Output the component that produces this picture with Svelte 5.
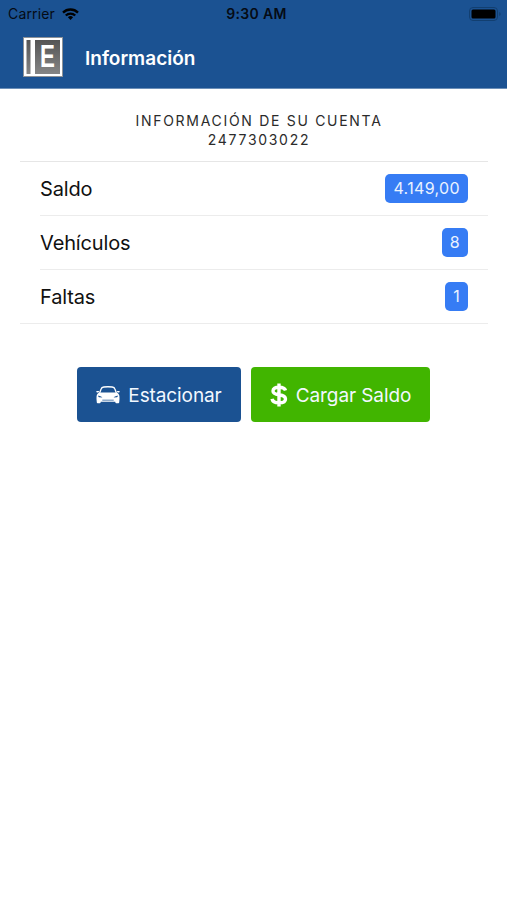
<script>
	let carrier = 'Carrier';
	let time = '9:30 AM';
	let title = 'Información';
	let account = '2477303022';

	let items = [
		{ label: 'Saldo', value: '4.149,00' },
		{ label: 'Vehículos', value: '8' },
		{ label: 'Faltas', value: '1' }
	];
</script>

<main>
	<header>
		<div class="status-bar">
			<div class="carrier">
				<span>{carrier}</span>
				<svg class="wifi" viewBox="0 0 17 12" width="17" height="12">
					<g fill="none" stroke="#000" stroke-width="2.3">
						<path d="M1 4.6a10.6 10.6 0 0 1 15 0" />
						<path d="M3.8 7.5a6.6 6.6 0 0 1 9.4 0" />
					</g>
					<path d="M8.500 12 5.900 9.300a3.700 3.700 0 0 1 5.200 0z" />
				</svg>
			</div>
			<strong>{time}</strong>
			<svg class="battery" viewBox="0 0 32 14" width="32" height="14">
				<rect x="0.500" y="0.500" width="28" height="13" rx="3.500" fill="none" stroke="#123f70" />
				<rect x="2.500" y="2.500" width="24" height="9" rx="1.500" />
				<path d="M30.300 5v4q1.300-.6 1.300-2t-1.300-2z" fill="#123f70" />
			</svg>
		</div>
		<div class="toolbar">
			<div class="logo">
				<svg viewBox="0 0 40 40" width="40" height="40">
					<defs>
						<linearGradient id="metal" x1="0" y1="0" x2="0" y2="1">
							<stop offset="0" stop-color="#555" />
							<stop offset="1" stop-color="#858585" />
						</linearGradient>
					</defs>
					<rect x="0.500" y="0.500" width="39" height="39" fill="#fff" stroke="#8d9298" />
					<rect x="3.500" y="3" width="4" height="34" fill="url(#metal)" />
					<rect x="12" y="3" width="25" height="34" fill="url(#metal)" />
				</svg>
				<span>E</span>
			</div>
			<h1>{title}</h1>
		</div>
	</header>

	<section class="account">
		<h2>Información de su cuenta<br />{account}</h2>
		<ul>
			{#each items as { label, value }}
				<li>
					<div class="row">
						<span>{label}</span>
						<span class="badge">{value}</span>
					</div>
				</li>
			{/each}
		</ul>
	</section>

	<div class="actions">
		<button class="park">
			<svg viewBox="0 0 24 18" width="24" height="18">
				<path d="M3.600 7 5.100 3Q5.600 1.300 7.800 1q4.200-.5 8.400 0 2.200.3 2.700 2l1.500 4" fill="none" stroke="#fff" stroke-width="1.300" />
				<path d="M.6 5h2.500l-.5 1.500H.9q-1-.8-.3-1.500zM23.400 5h-2.500l.5 1.500h1.700q1-.8.3-1.500z" fill="#fff" />
				<path fill-rule="evenodd" d="M4 6.500h16q2.400.4 3.100 2.300.5 1.500.4 4.300l-.3 3.400q-.1.700-.8.700h-2.200q-.7 0-.8-.7l-.2-.7H4.800l-.2.700q-.1.700-.8.700H1.600q-.7 0-.8-.7L.5 13.100Q.4 10.300.9 8.800 1.600 6.900 4 6.500zM2.200 9.400q0 1.400.8 1.900l3.400.3q-.5-1.500-4.200-2.200zm19.600 0q0 1.400-.8 1.900l-3.400.3q.5-1.500 4.200-2.200zM6.300 13.700v.7h11.400v-.7z" fill="#fff" />
			</svg>
			<span>Estacionar</span>
		</button>
		<button class="charge">
			<svg viewBox="0 0 18 24" width="18" height="24">
				<path d="M15.500 7.500Q14.600 4.200 9 4.200q-6 0-6 3.700 0 3 6 3.800 6.500.8 6.500 4.200 0 3.900-6.500 3.900-6.200 0-7-3.900M9 .5v23" fill="none" stroke="#fff" stroke-width="3.400" />
			</svg>
			<span>Cargar Saldo</span>
		</button>
	</div>
</main>

<style>
	:global(body) {
		margin: 0;
		background: #fff;
	}

	main {
		min-height: 900px;
		font-family: Inter, "Liberation Sans", sans-serif;
		color: #111;
	}

	header {
		height: 88px;
		background: #1b5292;
		border-bottom: 1px solid #6c8fb8;
	}

	.status-bar {
		display: grid;
		grid-template-columns: 1fr auto 1fr;
		align-items: center;
		height: 27px;
		padding: 0 6px 0 8px;
		font-size: 14px;
		color: #050b14;
	}

	.status-bar strong {
		padding-left: 4px;
		font-weight: 600;
		letter-spacing: 0.35px;
	}

	.carrier {
		display: flex;
		align-items: center;
		gap: 7px;
		letter-spacing: 0.15px;
	}

	.battery {
		justify-self: end;
	}

	.toolbar {
		display: flex;
		align-items: center;
		gap: 22px;
		height: 60px;
		padding-left: 23px;
	}

	.logo {
		position: relative;
		width: 40px;
		height: 40px;
	}

	.logo svg {
		display: block;
	}

	.logo span {
		position: absolute;
		left: 17px;
		top: 4px;
		font: bold 31px/32px "Liberation Sans", sans-serif;
		color: #fff;
		transform: scaleX(0.72);
		transform-origin: left;
	}

	h1 {
		margin: 0;
		padding-top: 2px;
		font-size: 19px;
		font-weight: 600;
		color: #fff;
	}

	.account {
		padding: 23px 19px 0 20px;
	}

	h2 {
		margin: 0;
		padding: 0 0 12px 10px;
		font-size: 14px;
		line-height: 18.500px;
		font-weight: 400;
		letter-spacing: 1.7px;
		text-align: center;
		text-transform: uppercase;
		color: #2b2b2b;
	}

	ul {
		margin: 0;
		padding: 0;
		border-top: 1px solid #e6e6e6;
		list-style: none;
	}

	li {
		padding-left: 20px;
	}

	.row {
		display: flex;
		justify-content: space-between;
		align-items: center;
		box-sizing: border-box;
		height: 54px;
		padding-right: 20px;
		border-bottom: 1px solid #ececec;
		font-size: 20px;
		letter-spacing: -0.15px;
	}

	li:last-child {
		padding-left: 0;
	}

	li:last-child .row {
		padding-left: 20px;
	}

	.badge {
		padding: 0 8px;
		border-radius: 5px;
		background: #367cf4;
		font-size: 16px;
		line-height: 29px;
		letter-spacing: 0.35px;
		color: #eaf2ff;
	}

	.actions {
		display: flex;
		justify-content: center;
		gap: 10px;
		padding-top: 43px;
	}

	button {
		display: flex;
		align-items: center;
		justify-content: center;
		gap: 8px;
		height: 55px;
		padding: 0;
		border: 0;
		border-radius: 4px;
		font-family: inherit;
		font-size: 19px;
		letter-spacing: -0.1px;
		color: #f2f8ff;
	}

	button span {
		padding-top: 2px;
	}

	.park {
		width: 164px;
		background: #1b5292;
	}

	.charge {
		width: 179px;
		background: #41b500;
	}
</style>
